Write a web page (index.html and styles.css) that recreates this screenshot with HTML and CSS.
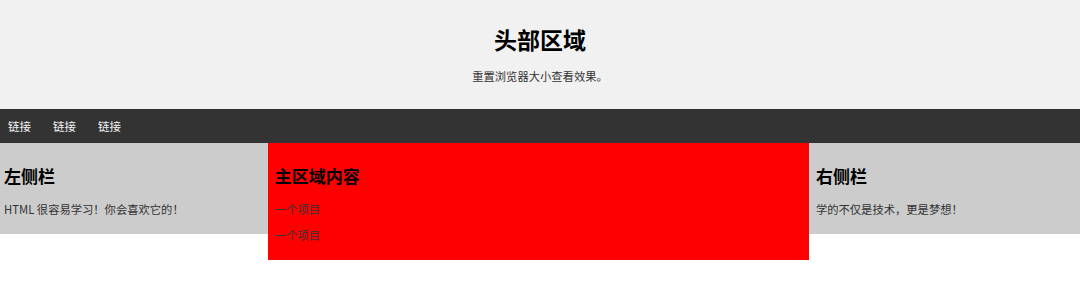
FILE: index.html
```html
<!DOCTYPE html>
<html lang="zh">
<head>
<meta charset="utf-8">
<title>布局</title>
<link rel="stylesheet" href="styles.css">
</head>
<body>
<header class="header">
  <h1 class="header-title">头部区域</h1>
  <p class="header-sub">重置浏览器大小查看效果。</p>
</header>
<nav class="navbar">
  <a class="nav-link" href="#">链接</a>
  <a class="nav-link" href="#">链接</a>
  <a class="nav-link" href="#">链接</a>
</nav>
<div class="row">
  <div class="side side-left">
    <h2 class="block-title">左侧栏</h2>
    <p class="block-text">HTML 很容易学习！你会喜欢它的！</p>
  </div>
  <div class="main">
    <h2 class="block-title">主区域内容</h2>
    <p class="block-text">一个项目</p>
    <p class="block-text item-next">一个项目</p>
  </div>
  <div class="side side-right">
    <h2 class="block-title">右侧栏</h2>
    <p class="block-text">学的不仅是技术，更是梦想！</p>
  </div>
</div>
</body>
</html>
```
FILE: styles.css
```css
* { box-sizing: border-box; }
body {
  margin: 0;
  background: #ffffff;
  font-family: "Noto Sans CJK SC", "Noto Sans", sans-serif;
  color: #333;
}
.header {
  background: #f1f1f1;
  text-align: center;
  padding: 24px 0 25px;
}
.header-title {
  margin: 0;
  font-size: 23px;
  line-height: 30px;
  font-weight: 700;
  color: #000;
}
.header-sub {
  margin: 14px 0 0;
  font-size: 11.3px;
  line-height: 16px;
  color: #333;
}
.navbar {
  display: flex;
  background: #333333;
  height: 34px;
  align-items: center;
  padding-left: 8px;
  gap: 22px;
}
.nav-link {
  color: #f2f2f2;
  text-decoration: none;
  font-size: 11.5px;
  line-height: 16px;
}
.row {
  display: flex;
  align-items: flex-start;
}
.side {
  background: #cccccc;
  padding: 21px 7px 17px;
}
.side-left { flex: 0 0 24.8%; padding-left: 4px; }
.side-right { flex: 1 1 auto; }
.main {
  flex: 0 0 50.1%;
  background: #ff0000;
  padding: 21px 7px 17px;
}
.block-title {
  margin: 0;
  font-size: 17px;
  line-height: 24px;
  font-weight: 700;
  color: #000;
}
.block-text {
  margin: 13px 0 0;
  font-size: 11.3px;
  line-height: 16px;
  color: #333;
}
.item-next { margin-top: 10px; }
```
